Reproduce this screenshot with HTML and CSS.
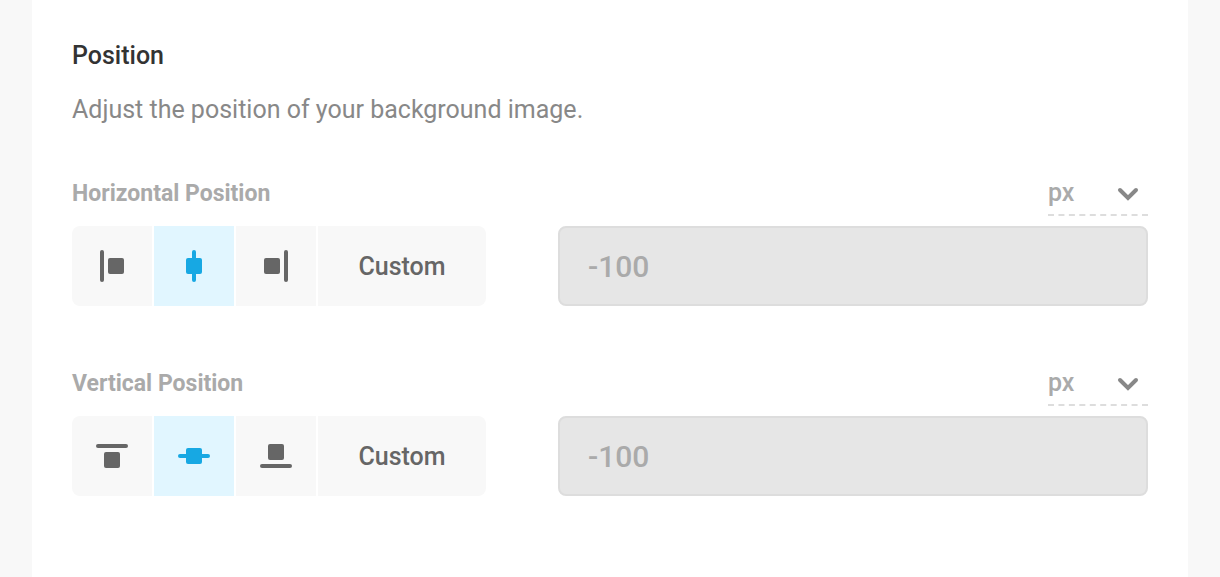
FILE: index.html
```
<!DOCTYPE html>
<html lang="en">
<head>
    <meta charset="UTF-8">
    <meta name="viewport" content="width=device-width, initial-scale=1.0">
    <title>Background Position</title>
    <link rel="stylesheet" href="styles.css">
</head>
<body>
    <main class="panel">
        <h2 class="title">Position</h2>
        <p class="description">Adjust the position of your background image.</p>

        <div class="position-row">
            <div class="field">
                <span class="field-label" id="horizontal-label">Horizontal Position</span>
                <div class="button-group" role="group" aria-labelledby="horizontal-label">
                    <button type="button" class="option" aria-label="Left">
                        <svg width="32" height="32" viewBox="0 0 32 32" fill="currentColor">
                            <rect x="4" y="0" width="4" height="32" rx="2"/>
                            <rect x="12" y="8" width="16" height="16" rx="2"/>
                        </svg>
                    </button>
                    <button type="button" class="option active" aria-label="Center" aria-pressed="true">
                        <svg width="32" height="32" viewBox="0 0 32 32" fill="currentColor">
                            <rect x="14" y="0" width="4" height="32" rx="2"/>
                            <rect x="8" y="8" width="16" height="16" rx="2"/>
                        </svg>
                    </button>
                    <button type="button" class="option" aria-label="Right">
                        <svg width="32" height="32" viewBox="0 0 32 32" fill="currentColor">
                            <rect x="24" y="0" width="4" height="32" rx="2"/>
                            <rect x="4" y="8" width="16" height="16" rx="2"/>
                        </svg>
                    </button>
                    <button type="button" class="option custom">Custom</button>
                </div>
            </div>
            <div class="field">
                <div class="unit">
                    <select class="unit-select" aria-label="Horizontal unit">
                        <option>px</option>
                        <option>%</option>
                    </select>
                    <svg class="chevron" width="22" height="14" viewBox="0 0 22 14">
                        <path d="M3 3l8 8 8-8" fill="none" stroke="currentColor" stroke-width="4" stroke-linecap="round"/>
                    </svg>
                </div>
                <input class="value" type="text" value="-100" aria-label="Horizontal value" disabled>
            </div>
        </div>

        <div class="position-row">
            <div class="field">
                <span class="field-label" id="vertical-label">Vertical Position</span>
                <div class="button-group" role="group" aria-labelledby="vertical-label">
                    <button type="button" class="option" aria-label="Top">
                        <svg width="32" height="32" viewBox="0 0 32 32" fill="currentColor">
                            <rect x="0" y="4" width="32" height="4" rx="2"/>
                            <rect x="8" y="12" width="16" height="16" rx="2"/>
                        </svg>
                    </button>
                    <button type="button" class="option active" aria-label="Middle" aria-pressed="true">
                        <svg width="32" height="32" viewBox="0 0 32 32" fill="currentColor">
                            <rect x="0" y="14" width="32" height="4" rx="2"/>
                            <rect x="8" y="8" width="16" height="16" rx="2"/>
                        </svg>
                    </button>
                    <button type="button" class="option" aria-label="Bottom">
                        <svg width="32" height="32" viewBox="0 0 32 32" fill="currentColor">
                            <rect x="0" y="24" width="32" height="4" rx="2"/>
                            <rect x="8" y="4" width="16" height="16" rx="2"/>
                        </svg>
                    </button>
                    <button type="button" class="option custom">Custom</button>
                </div>
            </div>
            <div class="field">
                <div class="unit">
                    <select class="unit-select" aria-label="Vertical unit">
                        <option>px</option>
                        <option>%</option>
                    </select>
                    <svg class="chevron" width="22" height="14" viewBox="0 0 22 14">
                        <path d="M3 3l8 8 8-8" fill="none" stroke="currentColor" stroke-width="4" stroke-linecap="round"/>
                    </svg>
                </div>
                <input class="value" type="text" value="-100" aria-label="Vertical value" disabled>
            </div>
        </div>
    </main>
</body>
</html>
```
FILE: styles.css
```
* {
    box-sizing: border-box;
}

body {
    margin: 0;
    background-color: #f8f8f8;
    font-family: Roboto, sans-serif;
}

.panel {
    min-height: 100vh;
    margin: 0 32px;
    padding: 40px;
    background-color: #ffffff;
}

.title {
    margin: 0 0 22px;
    font-size: 25px;
    font-weight: 500;
    line-height: 32px;
    color: #333333;
}

.description {
    margin: 0 0 46px;
    font-size: 25px;
    line-height: 32px;
    color: #888888;
}

.position-row {
    display: grid;
    grid-template-columns: auto 1fr;
    gap: 72px;
    margin-bottom: 56px;
}

.position-row:last-child {
    margin-bottom: 0;
}

.field {
    display: flex;
    flex-direction: column;
    gap: 10px;
}

.field-label {
    font-size: 23px;
    font-weight: 700;
    line-height: 44px;
    color: #aaaaaa;
}

.button-group {
    display: flex;
    gap: 2px;
    border-radius: 8px;
    overflow: hidden;
}

.option {
    display: flex;
    justify-content: center;
    align-items: center;
    width: 80px;
    height: 80px;
    padding: 0;
    border: none;
    background-color: #f8f8f8;
    color: #666666;
    font-family: inherit;
    font-size: 25px;
    font-weight: 500;
    cursor: pointer;
}

.option.active {
    background-color: #e1f6ff;
    color: #17a8e3;
}

.option.custom {
    width: 168px;
}

.unit {
    position: relative;
    align-self: flex-end;
    width: 100px;
    height: 44px;
}

.unit-select {
    appearance: none;
    width: 100%;
    height: 100%;
    padding: 0 0 2px;
    border: none;
    border-bottom: 2px dashed #dddddd;
    border-radius: 0;
    background: none;
    color: #aaaaaa;
    font-family: inherit;
    font-size: 25px;
    font-weight: 500;
}

/* sits over the select in place of the native arrow */
.chevron {
    position: absolute;
    top: 15px;
    right: 9px;
    color: #888888;
    pointer-events: none;
}

.value {
    width: 100%;
    height: 80px;
    padding: 0 28px;
    border: 2px solid #dddddd;
    border-radius: 8px;
    background-color: #e6e6e6;
    color: #aaaaaa;
    font-family: inherit;
    font-size: 30px;
    font-weight: 500;
}
```
